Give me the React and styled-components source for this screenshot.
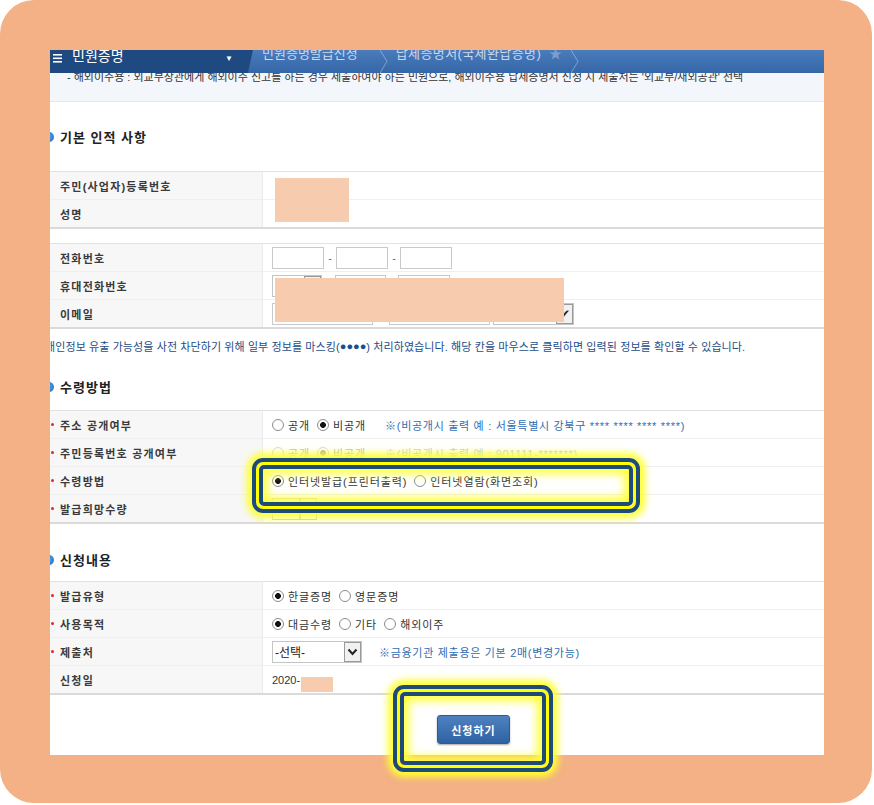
import React from "react";
import styled, { createGlobalStyle } from "styled-components";

const GlobalStyle = createGlobalStyle`
  body {
    margin: 0;
    background: #fff;
    font-family: "Liberation Sans", "Noto Sans CJK KR", sans-serif;
  }
`;

const Frame = styled.div`
  position: relative;
  width: 872px;
  height: 803px;
  box-sizing: border-box;
  padding: 50px 48px 48px 50px;
  background: #f3b185;
  border-radius: 34px;
`;

const Panel = styled.div`
  height: 100%;
  background: #fff;
  overflow: hidden;
  display: flex;
  flex-direction: column;
`;

/* ---- top nav ---- */
const Nav = styled.div`
  flex: none;
  display: flex;
  height: 23px;
  overflow: hidden;
  background: linear-gradient(#4a7bbb, #3567a8);
`;

const NavHome = styled.div`
  width: 203px;
  display: flex;
  align-items: flex-start;
  background: #1f4a81;
  clip-path: polygon(0 0, 100% 0, 97.5% 100%, 0 100%);
  color: #fff;
  font-size: 14px;
  line-height: 16px;
  span {
    margin-top: -2px;
  }
  .menu {
    margin: 0 10px 0 3px;
  }
  .caret {
    margin-left: auto;
    margin-right: 20px;
    font-size: 8px;
    margin-top: 1px;
  }
`;

const Crumb = styled.div`
  display: flex;
  align-items: flex-start;
  padding: 0 ${(p) => p.$pr}px 0 ${(p) => p.$pl}px;
  color: #c9d9ef;
  font-size: 13px;
  line-height: 16px;
  letter-spacing: ${(p) => p.$ls}px;
  span {
    margin-top: -4px;
  }
  .star {
    margin-left: 8px;
    color: #7c9fcf;
    letter-spacing: 0;
  }
`;

const Info = styled.div`
  flex: none;
  height: 28px;
  overflow: hidden;
  background: #f3f6fb;
  border-bottom: 1px solid #e3e8ef;
  padding-left: 17px;
  font-size: 11px;
  line-height: 14px;
  color: #333;
  div {
    margin-top: -3px;
  }
`;

/* ---- sections ---- */
const Heading = styled.h3`
  margin: ${(p) => p.$mt || 0}px 0 0 -6px;
  height: ${(p) => p.$h}px;
  display: flex;
  align-items: center;
  gap: 6px;
  font-size: 13px;
  font-weight: 700;
  color: #222;
  letter-spacing: 1px;
  &::before {
    content: "";
    width: 10px;
    height: 10px;
    border-radius: 50%;
    background: radial-gradient(circle at 40% 40%, #5aa6ea, #1a6cc0);
  }
`;

const Notice = styled.div`
  height: 34px;
  display: flex;
  align-items: center;
  margin-left: -5px;
  font-size: 11px;
  letter-spacing: 0.1px;
  color: #1d4d88;
  white-space: nowrap;
  .dots {
    font-size: 11px;
    letter-spacing: 0;
    color: #1a4f8f;
  }
`;

const Table = styled.div`
  margin-top: ${(p) => p.$mt || 0}px;
  border-top: 1px solid #e2e2e2;
  border-bottom: 2px solid #dadada;
`;

const Row = styled.div`
  display: grid;
  grid-template-columns: 213px 1fr;
  height: 27px;
  & + & {
    border-top: 1px solid #efefef;
  }
`;

const Label = styled.div`
  display: flex;
  align-items: center;
  padding-left: ${(p) => (p.$req ? 1 : 10)}px;
  background: #f7f7f7;
  border-right: 1px solid #ebebeb;
  font-size: 11px;
  font-weight: 700;
  color: #3a3a3a;
  letter-spacing: 1.2px;
  &::before {
    content: "";
    display: ${(p) => (p.$req ? "block" : "none")};
    width: 3px;
    height: 3px;
    margin-right: 6px;
    border-radius: 50%;
    background: #e2262b;
  }
`;

const Value = styled.div`
  display: flex;
  align-items: center;
  padding-left: 9px;
  font-size: 11px;
  color: #333;
  opacity: ${(p) => (p.$faded ? 0.35 : 1)};
`;

const Field = styled.span`
  display: inline-block;
  box-sizing: border-box;
  width: ${(p) => p.$w}px;
  height: 22px;
  border: 1px solid #c9c9c9;
  background: #fff;
`;

const Dash = styled.span`
  width: ${(p) => p.$w || 12}px;
  text-align: center;
  color: #666;
`;

const Select = styled.span`
  display: inline-flex;
  box-sizing: border-box;
  width: ${(p) => p.$w}px;
  height: 22px;
  border: 1px solid #c4c4c4;
  background: #fff;
  font-size: 12px;
  color: #222;
  align-items: center;
  .txt {
    flex: 1;
    padding-left: 2px;
  }
  .arrow {
    width: 17px;
    height: 100%;
    box-sizing: border-box;
    border: 1px solid #9a9a9a;
    background: #f1f1f1;
    display: flex;
    align-items: center;
    justify-content: center;
  }
`;

const Group = styled.div`
  display: flex;
  align-items: center;
  gap: 7px;
`;

const RadioItem = styled.label`
  display: flex;
  align-items: center;
  gap: 4px;
  letter-spacing: 0.9px;
  &::before {
    content: "";
    box-sizing: border-box;
    width: 12px;
    height: 12px;
    border-radius: 50%;
    border: 1px solid #8c8c8c;
    background: ${(p) =>
      p.$on ? "radial-gradient(circle, #111 0 2.6px, #fff 3.2px)" : "#fff"};
  }
`;

const Note = styled.span`
  margin-left: ${(p) => p.$ml || 16}px;
  color: #2f6db3;
  letter-spacing: 0.7px;
  white-space: nowrap;
`;

const Footer = styled.div`
  padding: 20px 0 0 387px;
`;

const Button = styled.button`
  width: 73px;
  height: 29px;
  border: 1px solid #2c5b98;
  border-radius: 3px;
  background: linear-gradient(#4f81c0, #2f62a3);
  box-shadow: 0 1px 2px rgba(0, 0, 0, 0.35);
  color: #fff;
  font-family: inherit;
  font-size: 11px;
  font-weight: 700;
  letter-spacing: 1px;
`;

/* ---- overlays: redaction masks and yellow annotations ---- */
const Mask = styled.div`
  position: absolute;
  left: ${(p) => p.$x}px;
  top: ${(p) => p.$y}px;
  width: ${(p) => p.$w}px;
  height: ${(p) => p.$h}px;
  background: #f7cbad;
`;

const Highlight = styled.div`
  position: absolute;
  left: ${(p) => p.$x}px;
  top: ${(p) => p.$y}px;
  width: ${(p) => p.$w}px;
  height: ${(p) => p.$h}px;
  box-sizing: border-box;
  border: 4px solid #1d4a77;
  border-radius: 11px;
  box-shadow: 0 0 7px 5px #ffff2e, inset 0 0 0 3px #ffff00;
  pointer-events: none;
  &::after {
    content: "";
    position: absolute;
    inset: 3px;
    border: 4px solid #1d4a77;
    border-radius: 5px;
    box-shadow: inset 0 0 8px 5px #ffff3c;
  }
`;

const Chevron = () => (
  <svg width="8" height="23" viewBox="0 0 8 23">
    <polyline points="0,0 7,11.5 0,23" fill="none" stroke="rgba(255,255,255,0.35)" strokeWidth="1" />
  </svg>
);

const Menu = () => (
  <svg width="9" height="10" viewBox="0 0 9 10">
    <rect y="1" width="9" height="1.6" fill="#fff" />
    <rect y="4.5" width="9" height="1.6" fill="#fff" />
    <rect y="8" width="9" height="1.6" fill="#fff" />
  </svg>
);

const Down = () => (
  <svg width="11" height="8" viewBox="0 0 11 8">
    <polyline points="1.5,1.5 5.5,6 9.5,1.5" fill="none" stroke="#222" strokeWidth="2" />
  </svg>
);

const Radio = ({ on, children }) => <RadioItem $on={on}>{children}</RadioItem>;

export default function App() {
  return (
    <>
      <GlobalStyle />
      <Frame>
        <Panel>
          <Nav>
            <NavHome>
              <span className="menu">
                <Menu />
              </span>
              <span>민원증명</span>
              <span className="caret">▼</span>
            </NavHome>
            <Crumb $pl={9} $pr={22} $ls={0}>
              <span>민원증명발급신청</span>
            </Crumb>
            <Chevron />
            <Crumb $pl={8} $pr={9} $ls={0.4}>
              <span>납세증명서(국세완납증명)</span>
              <span className="star">★</span>
            </Crumb>
            <Chevron />
          </Nav>
          <Info>
            <div>
              - 해외이주용 : 외교부장관에게 해외이주 신고를 하는 경우 제출하여야 하는 민원으로, 해외이주용 납세증명서 신청 시 제출처는 '외교부/재외공관' 선택
            </div>
          </Info>

          <Heading $h={69}>기본 인적 사항</Heading>
          <Table>
            <Row>
              <Label>주민(사업자)등록번호</Label>
              <Value />
            </Row>
            <Row>
              <Label>성명</Label>
              <Value />
            </Row>
          </Table>
          <Table $mt={14}>
            <Row>
              <Label>전화번호</Label>
              <Value>
                <Field $w={52} />
                <Dash>-</Dash>
                <Field $w={52} />
                <Dash>-</Dash>
                <Field $w={52} />
              </Value>
            </Row>
            <Row>
              <Label>휴대전화번호</Label>
              <Value>
                <Select $w={50}>
                  <span className="txt" />
                  <span className="arrow" />
                </Select>
                <Dash $w={13}>-</Dash>
                <Field $w={51} />
                <Dash>-</Dash>
                <Field $w={52} />
              </Value>
            </Row>
            <Row>
              <Label>이메일</Label>
              <Value>
                <Field $w={101} />
                <Dash $w={16} />
                <Field $w={101} />
                <Dash $w={3} />
                <Select $w={81}>
                  <span className="txt" />
                  <span className="arrow">✔</span>
                </Select>
              </Value>
            </Row>
          </Table>

          <Notice>
            개인정보 유출 가능성을 사전 차단하기 위해 일부 정보를 마스킹(<span className="dots">●●●●</span>) 처리하였습니다. 해당 칸을 마우스로 클릭하면 입력된 정보를 확인할 수 있습니다.
          </Notice>

          <Heading $h={47}>수령방법</Heading>
          <Table>
            <Row>
              <Label $req>주소 공개여부</Label>
              <Value>
                <Group>
                  <Radio>공개</Radio>
                  <Radio on>비공개</Radio>
                </Group>
                <Note $ml={19}>※(비공개시 출력 예 : 서울특별시 강북구 **** **** **** ****)</Note>
              </Value>
            </Row>
            <Row>
              <Label $req>주민등록번호 공개여부</Label>
              <Value $faded>
                <Group>
                  <Radio>공개</Radio>
                  <Radio on>비공개</Radio>
                </Group>
                <Note $ml={19}>※(비공개시 출력 예 : 901111-*******)</Note>
              </Value>
            </Row>
            <Row>
              <Label $req>수령방법</Label>
              <Value>
                <Group>
                  <Radio on>인터넷발급(프린터출력)</Radio>
                  <Radio>인터넷열람(화면조회)</Radio>
                </Group>
              </Value>
            </Row>
            <Row>
              <Label $req>발급희망수량</Label>
              <Value>
                <Field $w={28} />
                <Field $w={17} />
              </Value>
            </Row>
          </Table>

          <Heading $h={43} $mt={14}>
            신청내용
          </Heading>
          <Table>
            <Row>
              <Label $req>발급유형</Label>
              <Value>
                <Group>
                  <Radio on>한글증명</Radio>
                  <Radio>영문증명</Radio>
                </Group>
              </Value>
            </Row>
            <Row>
              <Label $req>사용목적</Label>
              <Value>
                <Group>
                  <Radio on>대금수령</Radio>
                  <Radio>기타</Radio>
                  <Radio>해외이주</Radio>
                </Group>
              </Value>
            </Row>
            <Row>
              <Label $req>제출처</Label>
              <Value>
                <Select $w={90}>
                  <span className="txt">-선택-</span>
                  <span className="arrow">
                    <Down />
                  </span>
                </Select>
                <Note $ml={17}>※금융기관 제출용은 기본 2매(변경가능)</Note>
              </Value>
            </Row>
            <Row>
              <Label>신청일</Label>
              <Value>2020-</Value>
            </Row>
          </Table>

          <Footer>
            <Button>신청하기</Button>
          </Footer>
        </Panel>

        <Mask $x={275} $y={178} $w={74} $h={44} />
        <Mask $x={275} $y={278} $w={289} $h={44} />
        <Mask $x={301} $y={677} $w={32} $h={15} />

        <Highlight $x={252} $y={458} $w={388} $h={55} />
        <Highlight $x={393} $y={685} $w={160} $h={87} />
      </Frame>
    </>
  );
}
